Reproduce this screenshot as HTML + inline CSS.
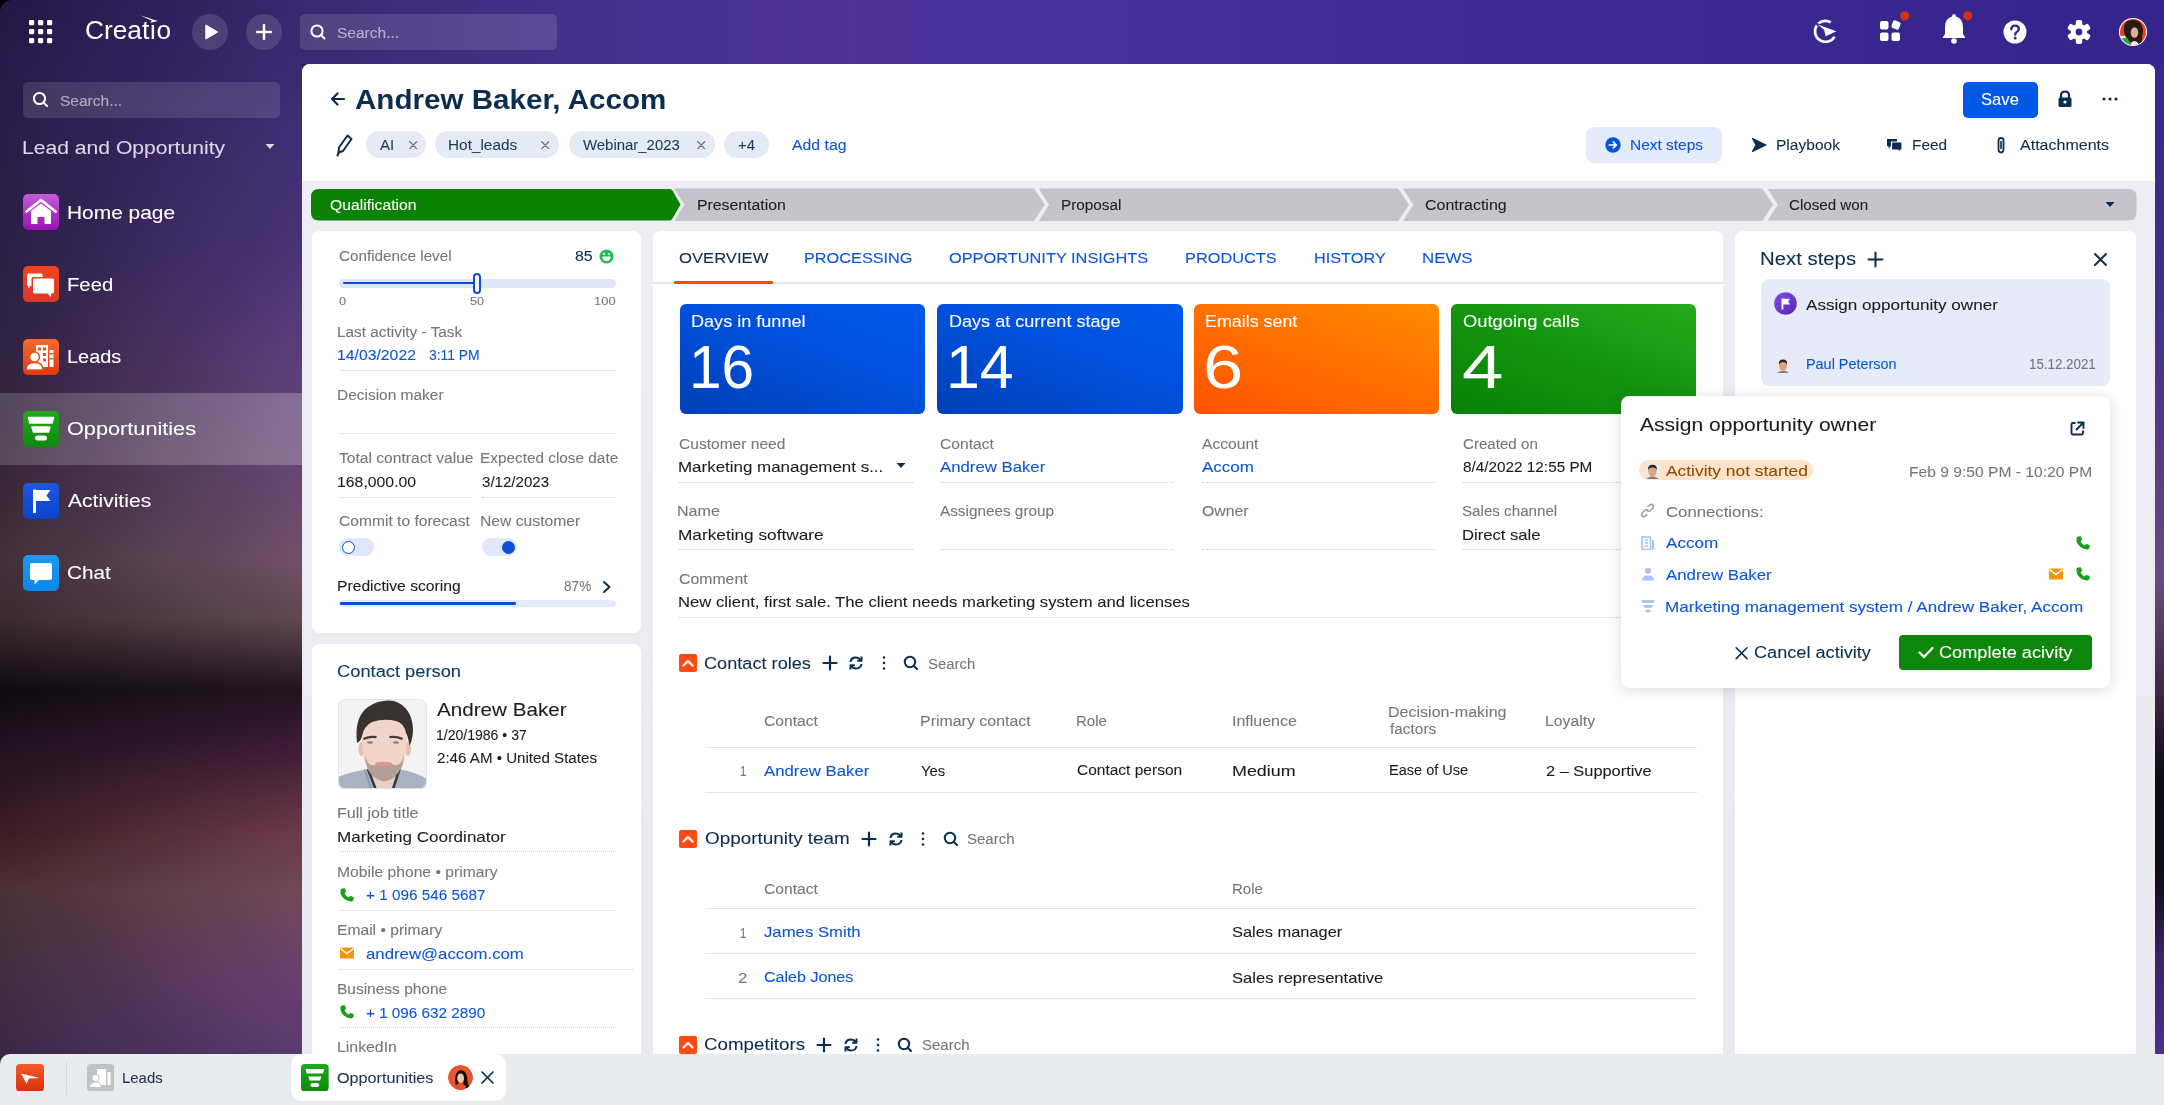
<!DOCTYPE html>
<html><head><meta charset="utf-8"><title>Creatio</title>
<style>
html,body{margin:0;padding:0;width:2164px;height:1105px;overflow:hidden;background:#000;}
body{position:relative;font-family:"Liberation Sans", sans-serif;}
.r{position:absolute;}
.t{position:absolute;white-space:nowrap;line-height:1;transform-origin:0 0;-webkit-text-stroke:0.08px currentColor;}
</style></head><body>
<div class="r" style="left:0;top:0;width:2164px;height:1105px;background:#000"></div>
<div class="r" style="left:0;top:0;width:2164px;height:1105px;border-top-left-radius:12px;overflow:hidden"><div class="r" style="left:0;top:0;width:2164px;height:1105px;background:linear-gradient(180deg,#231744 0px,#281a48 63px,#2c1e44 250px,#302240 350px,#3a2838 500px,#40303a 560px,#3a2a30 620px,#120a10 690px,#1e1020 740px,#3a1c24 830px,#4a3035 890px,#402c40 980px,#3a2848 1054px)"></div><div class="r" style="left:0;top:0;width:302px;height:1105px;background:linear-gradient(180deg,#3a2870 0px,#3b2a72 63px,#4a3478 250px,#5a3e7a 350px,#6a4a70 500px,#705068 560px,#604850 620px,#201420 690px,#3a1a35 740px,#6a3a48 830px,#704a58 890px,#6a4070 980px,#5a3a70 1054px);-webkit-mask-image:linear-gradient(90deg,rgba(0,0,0,0) 0px,rgba(0,0,0,1) 302px);mask-image:linear-gradient(90deg,rgba(0,0,0,0) 0px,rgba(0,0,0,1) 302px)"></div><div class="r" style="left:2150px;top:0;width:14px;height:1105px;background:linear-gradient(180deg,#37268f 0px,#3c2a8c 200px,#4e3688 400px,#6a4a80 580px,#3a2440 700px,#0e0814 780px,#140a1a 880px,#3a2468 960px,#4a3090 1054px)"></div><div class="r" style="left:302px;top:0;width:1862px;height:63.5px;background:linear-gradient(90deg,#3a2870 0px,#45308a 258px,#4c3196 548px,#46309a 848px,#3f2a96 1198px,#39268f 1548px,#35248b 1862px)"></div><div class="r" style="left:0;top:40px;width:302px;height:40px;background:linear-gradient(180deg,rgba(0,0,0,0),rgba(0,0,0,0))"></div></div>
<svg class="r" style="left:0px;top:0px;" width="60" height="60" viewBox="0 0 60 60"><rect x="29.0" y="20.0" width="5.2" height="5.2" rx="1.3" fill="#fff"/><rect x="29.0" y="29.0" width="5.2" height="5.2" rx="1.3" fill="#fff"/><rect x="29.0" y="38.0" width="5.2" height="5.2" rx="1.3" fill="#fff"/><rect x="38.0" y="20.0" width="5.2" height="5.2" rx="1.3" fill="#fff"/><rect x="38.0" y="29.0" width="5.2" height="5.2" rx="1.3" fill="#fff"/><rect x="38.0" y="38.0" width="5.2" height="5.2" rx="1.3" fill="#fff"/><rect x="47.0" y="20.0" width="5.2" height="5.2" rx="1.3" fill="#fff"/><rect x="47.0" y="29.0" width="5.2" height="5.2" rx="1.3" fill="#fff"/><rect x="47.0" y="38.0" width="5.2" height="5.2" rx="1.3" fill="#fff"/></svg>
<div class="t" id="k860_397" style="left:84.95px;top:18.45px;font-size:25px;color:#fff;transform:scaleX(1.0500);-webkit-text-stroke:0;">Creat&#305;o</div>
<svg class="r" style="left:138px;top:12px;" width="24" height="14" viewBox="0 0 24 14"><path d="M2 3.2 Q9 5.5 20 9 L12.5 10.8 L13.8 8.6 Q8 6 2 3.2 Z" fill="#fff"/></svg>
<div class="r" style="left:191.5px;top:13.5px;width:36px;height:36px;background:rgba(255,255,255,0.13);border-radius:18px;"></div>
<svg class="r" style="left:191.5px;top:13.5px;" width="36" height="36" viewBox="0 0 36 36"><path d="M14 11.5 L25 18 L14 24.5 Z" fill="#fff" stroke="#fff" stroke-width="1.5" stroke-linejoin="round"/></svg>
<div class="r" style="left:245.5px;top:13.5px;width:36px;height:36px;background:rgba(255,255,255,0.13);border-radius:18px;"></div>
<svg class="r" style="left:245.5px;top:13.5px;" width="36" height="36" viewBox="0 0 36 36"><path d="M18 11 V25 M11 18 H25" stroke="#fff" stroke-width="2.4" stroke-linecap="round"/></svg>
<div class="r" style="left:300px;top:13.5px;width:257px;height:36px;background:rgba(255,255,255,0.12);border-radius:5px;"></div>
<svg class="r" style="left:308px;top:22px;" width="20" height="20" viewBox="0 0 20 20"><circle cx="9" cy="9" r="5.6" fill="none" stroke="#fff" stroke-width="2"/><path d="M13 13 L16.5 16.5" stroke="#fff" stroke-width="2" stroke-linecap="round"/></svg>
<div class="t" id="k3380_378" style="left:336.97px;top:25.05px;font-size:15px;color:rgba(255,255,255,0.55);transform:scaleX(1.0345);">Search...</div>
<svg class="r" style="left:1810px;top:16px;" width="32" height="32" viewBox="0 0 32 32"><path d="M24.6 20.65 A10.5 10.5 0 1 1 20.75 6.3" fill="none" stroke="#fff" stroke-width="2.6"/><path d="M4.8 6.8 L27.6 15.2 L15.2 21.2 L13.6 14.2 Z" fill="#fff" stroke="#3a2790" stroke-width="1.2" stroke-linejoin="round"/></svg>
<svg class="r" style="left:1876px;top:8px;" width="40" height="40" viewBox="0 0 40 40"><rect x="4" y="13" width="8.5" height="8.5" rx="2" fill="#fff"/><rect x="4" y="24.5" width="8.5" height="8.5" rx="2" fill="#fff"/><rect x="15.5" y="24.5" width="8.5" height="8.5" rx="2" fill="#fff"/><rect x="16" y="13" width="8" height="8" rx="2" fill="#fff" transform="rotate(20 20 17)"/><circle cx="28.7" cy="7.8" r="4.6" fill="#d52e10"/></svg>
<svg class="r" style="left:1938px;top:8px;" width="40" height="40" viewBox="0 0 40 40"><path d="M14 8.5 Q14 6 16 6 Q18 6 18 8.5 Q25 10.5 25 19 V26 L27.5 30 H4.5 L7 26 V19 Q7 10.5 14 8.5 Z" fill="#fff" transform="translate(0,0)"/><circle cx="16" cy="33" r="2.8" fill="#fff"/><circle cx="29.7" cy="7.8" r="4.6" fill="#d52e10"/></svg>
<svg class="r" style="left:2003px;top:19.5px;" width="24" height="24" viewBox="0 0 24 24"><circle cx="12" cy="12" r="11.5" fill="#fff"/><path d="M8.3 9.3 Q8.3 5.6 12 5.6 Q15.8 5.6 15.8 9 Q15.8 11 13.5 12.2 Q12.2 13 12.2 14.6" fill="none" stroke="#3a2790" stroke-width="2.4" stroke-linecap="round"/><circle cx="12.2" cy="18" r="1.5" fill="#3a2790"/></svg>
<svg class="r" style="left:2067px;top:19.5px;" width="24" height="24" viewBox="0 0 24 24"><g transform="translate(12,12)"><rect x="-3.2" y="-12" width="6.4" height="7" rx="2" fill="#fff" transform="rotate(0)"/><rect x="-3.2" y="-12" width="6.4" height="7" rx="2" fill="#fff" transform="rotate(60)"/><rect x="-3.2" y="-12" width="6.4" height="7" rx="2" fill="#fff" transform="rotate(120)"/><rect x="-3.2" y="-12" width="6.4" height="7" rx="2" fill="#fff" transform="rotate(180)"/><rect x="-3.2" y="-12" width="6.4" height="7" rx="2" fill="#fff" transform="rotate(240)"/><rect x="-3.2" y="-12" width="6.4" height="7" rx="2" fill="#fff" transform="rotate(300)"/><circle r="8.2" fill="#fff"/><circle r="3.4" fill="#3a2790"/></g></svg>
<svg class="r" style="left:2118px;top:17px;" width="30" height="30" viewBox="0 0 30 30"><defs><clipPath id="cav2"><circle cx="15" cy="15" r="13"/></clipPath></defs><circle cx="15" cy="15" r="14" fill="#fff"/><g clip-path="url(#cav2)"><rect width="30" height="30" fill="#e8441a"/><path d="M0 20 L9 18 L13 30 L0 30 Z" fill="#f4f4f4"/><path d="M2 23 Q7 19 11 22 L14 30 L2 30 Z" fill="#22a84a"/><path d="M6 10 Q7 3 14 3 Q22 2 24 9 Q26 14 24 20 Q25 25 21 28 L17 26 Q12 27 10 22 Q5 19 6 10 Z" fill="#2a1a16"/><ellipse cx="16.5" cy="15.5" rx="3.8" ry="5.2" fill="#dcae92"/><path d="M13 26 Q16 22 20 26 L20 30 L13 30 Z" fill="#f2f2f2"/></g></svg>
<div class="r" style="left:22.5px;top:81.5px;width:257px;height:36.5px;background:rgba(255,255,255,0.12);border-radius:5px;"></div>
<svg class="r" style="left:30px;top:89px;" width="20" height="20" viewBox="0 0 20 20"><circle cx="9.5" cy="9.5" r="5.6" fill="none" stroke="#fff" stroke-width="2"/><path d="M13.5 13.5 L17 17" stroke="#fff" stroke-width="2" stroke-linecap="round"/></svg>
<div class="t" id="k610_1055" style="left:59.97px;top:92.75px;font-size:15px;color:rgba(255,255,255,0.55);transform:scaleX(1.0345);">Search...</div>
<div class="t" id="k230_1545" style="left:21.86px;top:138.78px;font-size:18.5px;color:#dcd7e6;transform:scaleX(1.1412);">Lead and Opportunity</div>
<svg class="r" style="left:262px;top:142px;" width="16" height="10" viewBox="0 0 16 10"><path d="M3.5 2 L12.5 2 L8 7 Z" fill="#dcd7e6"/></svg>
<div class="r" style="left:0px;top:393px;width:302px;height:72px;background:linear-gradient(90deg, rgba(255,255,255,0.16), rgba(255,255,255,0.24));border-radius:0px;"></div>
<div class="t" id="k682_2195" style="left:67.07px;top:203.78px;font-size:18.5px;color:#ffffff;transform:scaleX(1.1298);">Home page</div>
<div class="t" id="k682_2915" style="left:67.11px;top:275.77px;font-size:18.5px;color:#ffffff;transform:scaleX(1.0950);">Feed</div>
<div class="t" id="k682_3635" style="left:67.12px;top:347.77px;font-size:18.5px;color:#ffffff;transform:scaleX(1.0776);">Leads</div>
<div class="t" id="k682_4355" style="left:67.03px;top:419.77px;font-size:18.5px;color:#ffffff;transform:scaleX(1.1725);">Opportunities</div>
<div class="t" id="k682_5075" style="left:68.20px;top:491.77px;font-size:18.5px;color:#ffffff;transform:scaleX(1.1397);">Activities</div>
<div class="t" id="k682_5795" style="left:67.08px;top:563.77px;font-size:18.5px;color:#ffffff;transform:scaleX(1.1211);">Chat</div>
<svg class="r" style="left:22.5px;top:194px;" width="36" height="36" viewBox="0 0 36 36"><defs><linearGradient id="gh" x1="0" y1="0" x2="0" y2="1"><stop offset="0" stop-color="#c35bd8"/><stop offset="1" stop-color="#9a12b4"/></linearGradient></defs><rect width="36" height="36" rx="5" fill="url(#gh)"/><path d="M3.5 17.5 L18 6 L32.5 17.5" fill="none" stroke="#fff" stroke-width="2.8" stroke-linecap="round" stroke-linejoin="round"/><path d="M8 17 L18 9.5 L28 17 V30 H21.5 V23 H14.5 V30 H8 Z" fill="#fff"/></svg>
<svg class="r" style="left:22.5px;top:266px;" width="36" height="36" viewBox="0 0 36 36"><defs><linearGradient id="gf" x1="0" y1="0" x2="0" y2="1"><stop offset="0" stop-color="#f4431d"/><stop offset="1" stop-color="#d83a25"/></linearGradient></defs><rect width="36" height="36" rx="5" fill="url(#gf)"/><path d="M4 9 Q4 7.5 5.5 7.5 H18 Q19.5 7.5 19.5 9 V11 H10 Q8.5 11 8.5 12.5 V20 H7.5 L5.5 22.5 V20 Q4 20 4 18.5 Z" fill="#fff"/><path d="M10 14 Q10 12.5 11.5 12.5 H29.5 Q31 12.5 31 14 V26 Q31 27.5 29.5 27.5 H28 V31 L24.5 27.5 H11.5 Q10 27.5 10 26 Z" fill="#fff"/></svg>
<svg class="r" style="left:22.5px;top:338.5px;" width="36" height="36" viewBox="0 0 36 36"><defs><linearGradient id="gl" x1="0" y1="0" x2="0" y2="1"><stop offset="0" stop-color="#f66a2e"/><stop offset="1" stop-color="#de3a12"/></linearGradient></defs><rect width="36" height="36" rx="5" fill="url(#gl)"/><rect x="13" y="6" width="12" height="22" fill="#fff"/><rect x="15" y="8.5" width="3" height="3" fill="#e8501c"/><rect x="20" y="8.5" width="3" height="3" fill="#e8501c"/><rect x="20" y="14" width="3" height="3" fill="#e8501c"/><rect x="20" y="19.5" width="3" height="3" fill="#e8501c"/><rect x="26.5" y="11" width="4" height="17" fill="#fff"/><rect x="26.5" y="14" width="4" height="1.5" fill="#e8501c"/><rect x="26.5" y="19" width="4" height="1.5" fill="#e8501c"/><circle cx="11.5" cy="18" r="5" fill="#fff" stroke="#e8501c" stroke-width="1.5"/><path d="M3 31 Q3 23.5 11.5 23.5 Q20 23.5 20 31 Z" fill="#fff" stroke="#e8501c" stroke-width="1.5"/></svg>
<svg class="r" style="left:22.5px;top:410.5px;" width="36" height="36" viewBox="0 0 36 36"><defs><linearGradient id="go" x1="0" y1="0" x2="0" y2="1"><stop offset="0" stop-color="#22a81a"/><stop offset="1" stop-color="#0d8a0c"/></linearGradient></defs><rect width="36" height="36" rx="5" fill="url(#go)"/><path d="M5.5 6.5 H30.5 L29 12 H7 Z" fill="#fff" stroke="#fff" stroke-width="1.5" stroke-linejoin="round"/><path d="M9 16 H27 L25.5 21 H10.5 Z" fill="#fff" stroke="#fff" stroke-width="1.5" stroke-linejoin="round"/><rect x="12" y="24.5" width="12" height="5" rx="2.5" fill="#fff"/></svg>
<svg class="r" style="left:22.5px;top:482.5px;" width="36" height="36" viewBox="0 0 36 36"><defs><linearGradient id="ga" x1="0" y1="0" x2="0" y2="1"><stop offset="0" stop-color="#1c56e6"/><stop offset="1" stop-color="#0a44c6"/></linearGradient></defs><rect width="36" height="36" rx="5" fill="url(#ga)"/><rect x="10" y="6.5" width="3" height="23.5" fill="#fff"/><path d="M13 7 H27.5 L23.5 12.5 L27.5 18 H13 Z" fill="#fff"/></svg>
<svg class="r" style="left:22.5px;top:554.5px;" width="36" height="36" viewBox="0 0 36 36"><defs><linearGradient id="gc" x1="0" y1="0" x2="0" y2="1"><stop offset="0" stop-color="#1f9af0"/><stop offset="1" stop-color="#0b86e8"/></linearGradient></defs><rect width="36" height="36" rx="5" fill="url(#gc)"/><path d="M7 10 Q7 8 9 8 H27 Q29 8 29 10 V23 Q29 25 27 25 H16 L11.5 29.5 V25 H9 Q7 25 7 23 Z" fill="#fff"/></svg>
<div class="r" style="left:302px;top:63.5px;width:1853px;height:991px;background:linear-gradient(180deg,#efeef5,#ebe9f0);border-top-left-radius:8px;border-top-right-radius:8px;overflow:hidden"><div style="position:absolute;left:0;top:0;width:100%;height:117.5px;background:#fff"></div></div>
<svg class="r" style="left:328px;top:90px;" width="20" height="18" viewBox="0 0 20 18"><path d="M4 9 H16 M9.5 3.5 L4 9 L9.5 14.5" fill="none" stroke="#0b2d4f" stroke-width="2.2" stroke-linecap="round" stroke-linejoin="round"/></svg>
<div class="t" id="k3565_1094" style="left:355.44px;top:85.60px;font-size:28px;color:#0b2d4f;transform:scaleX(1.0565);font-weight:700;-webkit-text-stroke:0;">Andrew Baker, Accom</div>
<svg class="r" style="left:334px;top:132px;" width="20" height="26" viewBox="0 0 20 26"><path d="M13.5 3.5 L17.5 7 L9 19 L4.5 20.5 L5 15.5 Z" fill="none" stroke="#0b2d4f" stroke-width="2" stroke-linejoin="round"/><path d="M5 20 L3.5 23.5" stroke="#0b2d4f" stroke-width="2" stroke-linecap="round"/></svg>
<div class="r" style="left:365.7px;top:131.4px;width:60.30000000000001px;height:27px;background:#e4ebf7;border-radius:13.5px;"></div>
<div class="t" id="k3796_1495" style="left:379.60px;top:137.60px;font-size:14px;color:#1e3a5a;transform:scaleX(1.0750);">AI</div>
<svg class="r" style="left:407.5px;top:139.5px;" width="11" height="11" viewBox="0 0 11 11"><path d="M1.8 1.8 L8.6 8.6 M8.6 1.8 L1.8 8.6" stroke="#6d7078" stroke-width="1.3" stroke-linecap="round"/></svg>
<div class="r" style="left:435px;top:131.4px;width:124.39999999999998px;height:27px;background:#e4ebf7;border-radius:13.5px;"></div>
<div class="t" id="k4490_1495" style="left:447.90px;top:137.60px;font-size:14px;color:#1e3a5a;transform:scaleX(1.0968);">Hot_leads</div>
<svg class="r" style="left:540px;top:139.5px;" width="11" height="11" viewBox="0 0 11 11"><path d="M1.8 1.8 L8.6 8.6 M8.6 1.8 L1.8 8.6" stroke="#6d7078" stroke-width="1.3" stroke-linecap="round"/></svg>
<div class="r" style="left:568.8px;top:131.4px;width:146.10000000000002px;height:27px;background:#e4ebf7;border-radius:13.5px;"></div>
<div class="t" id="k5830_1495" style="left:583.00px;top:137.60px;font-size:14px;color:#1e3a5a;transform:scaleX(1.0659);">Webinar_2023</div>
<svg class="r" style="left:696px;top:139.5px;" width="11" height="11" viewBox="0 0 11 11"><path d="M1.8 1.8 L8.6 8.6 M8.6 1.8 L1.8 8.6" stroke="#6d7078" stroke-width="1.3" stroke-linecap="round"/></svg>
<div class="r" style="left:724px;top:131.4px;width:44.5px;height:27px;background:#e4ebf7;border-radius:13.5px;"></div>
<div class="t" id="k7380_1495" style="left:738.00px;top:137.60px;font-size:14px;color:#1e3a5a;transform:scaleX(1.0625);">+4</div>
<div class="t" id="k7918_1497" style="left:791.80px;top:137.80px;font-size:14px;color:#0a55d6;transform:scaleX(1.1292);">Add tag</div>
<div class="r" style="left:1963px;top:81.7px;width:74.8px;height:36px;background:#0058e6;border-radius:5px;"></div>
<div class="t" id="k19817_1054" style="left:1980.69px;top:91.38px;font-size:16.5px;color:#fff;transform:scaleX(1.0083);">Save</div>
<svg class="r" style="left:2056px;top:89px;" width="18" height="20" viewBox="0 0 18 20"><path d="M5 9 V6.5 Q5 2.5 9 2.5 Q13 2.5 13 6.5 V9" fill="none" stroke="#0b2d4f" stroke-width="2.2"/><rect x="2.5" y="8.5" width="13" height="9.5" rx="1.5" fill="#0b2d4f"/><circle cx="9" cy="13" r="1.6" fill="#fff"/></svg>
<svg class="r" style="left:2100px;top:94px;" width="20" height="10" viewBox="0 0 20 10"><circle cx="4" cy="5" r="1.6" fill="#0b2d4f"/><circle cx="10" cy="5" r="1.6" fill="#0b2d4f"/><circle cx="16" cy="5" r="1.6" fill="#0b2d4f"/></svg>
<div class="r" style="left:1585.8px;top:126.7px;width:135.8px;height:36px;background:#e4ecfb;border-radius:8px;"></div>
<svg class="r" style="left:1604px;top:136px;" width="18" height="18" viewBox="0 0 18 18"><circle cx="9" cy="9" r="7.7" fill="#0a55d6"/><path d="M5.3 9 H12.2 M9.3 6 L12.3 9 L9.3 12" fill="none" stroke="#fff" stroke-width="1.7" stroke-linecap="round" stroke-linejoin="round"/></svg>
<div class="t" id="k16310_1499" style="left:1629.90px;top:138.00px;font-size:14px;color:#0a55d6;transform:scaleX(1.1046);">Next steps</div>
<svg class="r" style="left:1750px;top:136px;" width="18" height="18" viewBox="0 0 18 18"><path d="M2.5 2.5 L16 9 L2.5 15.5 L6 9 Z" fill="#0b2d4f" stroke="#0b2d4f" stroke-width="1.2" stroke-linejoin="round"/></svg>
<div class="t" id="k17767_1499" style="left:1775.59px;top:138.00px;font-size:14px;color:#0b2d4f;transform:scaleX(1.1105);">Playbook</div>
<svg class="r" style="left:1885px;top:136px;" width="20" height="18" viewBox="0 0 20 18"><path d="M2 3 H12 V10 H6 L3.5 12.5 V10 H2 Z" fill="#0b2d4f"/><path d="M6.5 6 H17 V14 H15.5 V16.5 L13 14 H6.5 Z" fill="#0b2d4f" stroke="#fff" stroke-width="1.2"/></svg>
<div class="t" id="k19130_1499" style="left:1911.90px;top:138.00px;font-size:14px;color:#0b2d4f;transform:scaleX(1.1000);">Feed</div>
<svg class="r" style="left:1993px;top:135px;" width="16" height="20" viewBox="0 0 16 20"><path d="M10.5 5 V14 Q10.5 17.5 8 17.5 Q5.5 17.5 5.5 14 V6 Q5.5 3 8 3 Q10.5 3 10.5 5" fill="none" stroke="#0b2d4f" stroke-width="1.8"/><path d="M8 6.5 V13.5" stroke="#0b2d4f" stroke-width="1.6" stroke-linecap="round"/></svg>
<div class="t" id="k20198_1499" style="left:2019.80px;top:138.00px;font-size:14px;color:#0b2d4f;transform:scaleX(1.1436);">Attachments</div>
<svg class="r" style="left:0;top:0" width="2164" height="240"><path d="M319 189 H670 Q671.5 189 672.5 190.5 L680.5 204.5 L672.5 218.5 Q671.5 220.5 670 220.5 H319 Q311 220.5 311 212.5 V197 Q311 189 319 189 Z" fill="#0c8204"/><path d="M675 189 H1033.8 L1044.3 204.7 L1033.8 220.5 H675 L685 204.7 Z" fill="#c5c4cb" stroke="#c5c4cb" stroke-width="1" stroke-linejoin="round"/><path d="M1039.6 189 H1398.0 L1408.5 204.7 L1398.0 220.5 H1039.6 L1049.6 204.7 Z" fill="#c5c4cb" stroke="#c5c4cb" stroke-width="1" stroke-linejoin="round"/><path d="M1403.8 189 H1762.0 L1772.5 204.7 L1762.0 220.5 H1403.8 L1413.8 204.7 Z" fill="#c5c4cb" stroke="#c5c4cb" stroke-width="1" stroke-linejoin="round"/><path d="M1767.8 189 H2128.5 Q2136.5 189 2136.5 197 V212.5 Q2136.5 220.5 2128.5 220.5 H1767.8 L1777.8 204.7 Z" fill="#c5c4cb"/></svg>
<div class="t" id="k3295_2100" style="left:329.50px;top:198.10px;font-size:14px;color:#fff;transform:scaleX(1.1234);">Qualification</div>
<div class="t" id="k6980_2100" style="left:696.87px;top:198.10px;font-size:14px;color:#202020;transform:scaleX(1.1299);">Presentation</div>
<div class="t" id="k10617_2100" style="left:1060.61px;top:198.10px;font-size:14px;color:#202020;transform:scaleX(1.0926);">Proposal</div>
<div class="t" id="k14250_2100" style="left:1425.00px;top:198.10px;font-size:14px;color:#202020;transform:scaleX(1.1408);">Contracting</div>
<div class="t" id="k17890_2100" style="left:1789.00px;top:198.10px;font-size:14px;color:#202020;transform:scaleX(1.0822);">Closed won</div>
<svg class="r" style="left:2102px;top:200px;" width="16" height="10" viewBox="0 0 16 10"><path d="M3.5 2 L12.5 2 L8 7 Z" fill="#0b2d4f"/></svg>
<div class="r" style="left:312px;top:230.5px;width:329px;height:402.5px;background:#fff;border-radius:8px;"></div>
<div class="t" id="k3385_2610" style="left:338.50px;top:249.10px;font-size:14px;color:#767676;transform:scaleX(1.0874);">Confidence level</div>
<div class="t" id="k5750_2610" style="left:575.00px;top:249.10px;font-size:14px;color:#0b2d4f;transform:scaleX(1.1333);">85</div>
<svg class="r" style="left:598px;top:248px;" width="17" height="17" viewBox="0 0 17 17"><circle cx="8.5" cy="8.5" r="7" fill="#22bf55"/><path d="M4.5 8.5 Q4.5 13 8.5 13 Q12.5 13 12.5 8.5 Z" fill="#fff"/><circle cx="6" cy="6" r="1.1" fill="#fff"/><circle cx="11" cy="6" r="1.1" fill="#fff"/></svg>
<div class="r" style="left:338.5px;top:279px;width:277px;height:8.6px;background:#dce6f7;border-radius:4.3px;"></div>
<div class="r" style="left:343px;top:281.8px;width:133px;height:2.6px;background:#0b4fd8;border-radius:1.3px;"></div>
<div class="r" style="left:472.7px;top:273px;width:8px;height:20.5px;background:#fff;border-radius:4px;border:2px solid #0b4fd8;box-sizing:border-box"></div>
<div class="t" id="k3385_3057" style="left:338.50px;top:296.35px;font-size:11px;color:#767676;transform:scaleX(1.1667);">0</div>
<div class="t" id="k4698_3057" style="left:469.80px;top:296.35px;font-size:11px;color:#767676;transform:scaleX(1.1500);">50</div>
<div class="t" id="k5950_3057" style="left:593.82px;top:296.35px;font-size:11px;color:#767676;transform:scaleX(1.1765);">100</div>
<div class="t" id="k3385_3365" style="left:337.40px;top:324.60px;font-size:14px;color:#767676;transform:scaleX(1.0973);">Last activity - Task</div>
<div class="t" id="k3385_3602" style="left:337.45px;top:347.45px;font-size:15px;color:#0a55d6;transform:scaleX(1.0514);">14/03/2022</div>
<div class="t" id="k4285_3602" style="left:428.50px;top:347.45px;font-size:15px;color:#0a55d6;transform:scaleX(0.9259);">3:11 PM</div>
<div class="r" style="left:338.5px;top:370px;width:277.5px;height:0;border-top:1px dotted #cfcfd6;"></div>
<div class="t" id="k3385_4000" style="left:337.40px;top:388.10px;font-size:14px;color:#767676;transform:scaleX(1.1042);">Decision maker</div>
<div class="r" style="left:338.5px;top:433px;width:277.5px;height:0;border-top:1px dotted #cfcfd6;"></div>
<div class="t" id="k3385_4632" style="left:338.50px;top:451.30px;font-size:14px;color:#767676;transform:scaleX(1.1150);">Total contract value</div>
<div class="t" id="k4815_4632" style="left:480.40px;top:451.30px;font-size:14px;color:#767676;transform:scaleX(1.0960);">Expected close date</div>
<div class="t" id="k3385_4866" style="left:337.45px;top:473.85px;font-size:15px;color:#1c1c1c;transform:scaleX(1.0541);">168,000.00</div>
<div class="t" id="k4815_4866" style="left:481.50px;top:473.85px;font-size:15px;color:#1c1c1c;transform:scaleX(1.0045);">3/12/2023</div>
<div class="r" style="left:338.5px;top:496.5px;width:133.5px;height:0;border-top:1px dotted #cfcfd6;"></div>
<div class="r" style="left:481.5px;top:496.5px;width:134.5px;height:0;border-top:1px dotted #cfcfd6;"></div>
<div class="t" id="k3385_5257" style="left:338.50px;top:513.80px;font-size:14px;color:#767676;transform:scaleX(1.1144);">Commit to forecast</div>
<div class="t" id="k4815_5257" style="left:480.38px;top:513.80px;font-size:14px;color:#767676;transform:scaleX(1.1213);">New customer</div>
<div class="r" style="left:338.5px;top:538px;width:35.5px;height:18px;background:#dfe8fa;border-radius:9px;"></div>
<div class="r" style="left:342px;top:540.5px;width:13px;height:13px;border-radius:50%;background:#fff;border:1.8px solid #0b4fd8;box-sizing:border-box"></div>
<div class="r" style="left:481.5px;top:538px;width:35.5px;height:18px;background:#dfe8fa;border-radius:9px;"></div>
<div class="r" style="left:501.5px;top:540.5px;width:13.5px;height:13.5px;background:#0b4fd8;border-radius:7px;"></div>
<div class="t" id="k3385_5912" style="left:337.38px;top:579.30px;font-size:14px;color:#1c1c1c;transform:scaleX(1.1193);">Predictive scoring</div>
<div class="t" id="k5638_5912" style="left:563.80px;top:579.30px;font-size:14px;color:#767676;transform:scaleX(0.9714);">87%</div>
<svg class="r" style="left:600px;top:579px;" width="14" height="16" viewBox="0 0 14 16"><path d="M4 3 L9.5 8 L4 13" fill="none" stroke="#0b2d4f" stroke-width="2" stroke-linecap="round" stroke-linejoin="round"/></svg>
<div class="r" style="left:338.5px;top:600px;width:277px;height:6.6px;background:#e3ebf8;border-radius:3.3px;"></div>
<div class="r" style="left:340.4px;top:602px;width:175.6px;height:2.6px;background:#0b4fd8;border-radius:1.3px;"></div>
<div class="r" style="left:312px;top:644px;width:329px;height:420px;background:#fff;border-radius:8px;"></div>
<div class="t" id="k3384_6772" style="left:337.26px;top:663.60px;font-size:16px;color:#0d3a64;transform:scaleX(1.1430);">Contact person</div>
<svg class="r" style="left:338.4px;top:699.3px" width="89" height="90" viewBox="0 0 89 90"><defs><clipPath id="phc"><rect width="89" height="90" rx="7"/></clipPath>
<radialGradient id="skin" cx="0.5" cy="0.45" r="0.6"><stop offset="0" stop-color="#f0cdb8"/><stop offset="1" stop-color="#d9a88e"/></radialGradient></defs>
<g clip-path="url(#phc)"><rect width="89" height="90" fill="#f3f3f4"/>
<path d="M0 90 V78 Q12 73 30 70 L60 70 Q78 73 89 80 V90 Z" fill="#aab2c2"/>
<path d="M31 68 L38 90 L54 90 L61 68 Z" fill="#ead0c4"/>
<path d="M30 70 L37.5 90 M61.5 70 L55 90" stroke="#343a48" stroke-width="2.6"/>
<path d="M27 71 L33 90" stroke="#8a9ab8" stroke-width="2"/>
<ellipse cx="23.5" cy="50" rx="3" ry="7" fill="#e6beae"/><ellipse cx="70" cy="50" rx="3" ry="7" fill="#e6beae"/>
<path d="M24 40 Q24 78 46 82.5 Q68 78 69 40 Q69 20 46.5 18 Q24 20 24 40 Z" fill="#f0d5c8"/>
<path d="M27 56 Q28 79 46 82.5 Q65 79 66 56 Q63 68 56 66 Q46 61 37 66 Q30 68 27 56 Z" fill="#6a5a56" opacity="0.45"/>
<ellipse cx="45.5" cy="64.8" rx="8.5" ry="2.1" fill="#d99c98"/>
<path d="M19 44 Q16 18 30 8 Q42 0 56 2 Q74 8 75 30 Q75 40 71.5 47 Q70 37 68 34 Q66 24 58 22 Q46 19 34 23 Q26 27 24 37 Q23 42 19 44 Z" fill="#3a3230"/>
<path d="M25.5 40 Q32 36.8 38.5 38.2 M51.5 38.2 Q58 36.8 64.5 40" stroke="#4a3a35" stroke-width="2.2" fill="none"/>
<ellipse cx="32" cy="43.5" rx="3" ry="1.3" fill="#7a8585"/><ellipse cx="58" cy="43.5" rx="3" ry="1.3" fill="#7a8585"/>
</g><rect x="0.5" y="0.5" width="88" height="89" rx="7" fill="none" stroke="#e4e4e8"/></svg>
<div class="t" id="k4374_7172" style="left:437.40px;top:701.48px;font-size:18.5px;color:#1c1c1c;transform:scaleX(1.1155);">Andrew Baker</div>
<div class="t" id="k4374_7400" style="left:436.40px;top:728.10px;font-size:14px;color:#1c1c1c;transform:scaleX(1.0022);">1/20/1986 • 37</div>
<div class="t" id="k4374_7638" style="left:437.40px;top:752.07px;font-size:13.8px;color:#1c1c1c;transform:scaleX(1.0959);">2:46 AM • United States</div>
<div class="t" id="k3384_8178" style="left:337.25px;top:805.90px;font-size:14px;color:#767676;transform:scaleX(1.1500);">Full job title</div>
<div class="t" id="k3384_8415" style="left:337.26px;top:828.75px;font-size:15px;color:#1c1c1c;transform:scaleX(1.1372);">Marketing Coordinator</div>
<div class="r" style="left:338.5px;top:851.4px;width:277.5px;height:0;border-top:1px dotted #cfcfd6;"></div>
<div class="t" id="k3385_8770" style="left:337.38px;top:865.10px;font-size:14px;color:#767676;transform:scaleX(1.1189);">Mobile phone • primary</div>
<svg class="r" style="left:339px;top:887px;" width="16" height="16" viewBox="0 0 16 16"><path d="M3.2 1.5 L5.8 1.2 L7.2 4.8 L5.5 6.2 Q6.8 9.2 9.8 10.6 L11.2 8.8 L14.8 10.2 L14.5 12.8 Q14 14.6 12 14.6 Q6.5 14 3 9.5 Q1.2 6.5 1.4 3.4 Q1.6 1.8 3.2 1.5 Z" fill="#18a018"/></svg>
<div class="t" id="k3656_9002" style="left:365.60px;top:887.45px;font-size:15px;color:#0a55d6;transform:scaleX(1.0197);">+ 1 096 546 5687</div>
<div class="r" style="left:338.5px;top:909.7px;width:277.5px;height:0;border-top:1px dotted #cfcfd6;"></div>
<div class="t" id="k3385_9353" style="left:337.38px;top:923.40px;font-size:14px;color:#767676;transform:scaleX(1.1161);">Email • primary</div>
<svg class="r" style="left:339px;top:945px;" width="16" height="16" viewBox="0 0 16 16"><rect x="1" y="2.5" width="14" height="11" rx="1" fill="#f7930e"/><path d="M1.5 3.5 L8 8.5 L14.5 3.5" fill="none" stroke="#fff" stroke-width="1.5"/></svg>
<div class="t" id="k3656_9590" style="left:365.60px;top:946.25px;font-size:15px;color:#0a55d6;transform:scaleX(1.1186);">andrew@accom.com</div>
<div class="r" style="left:338.5px;top:968.6px;width:294.5px;height:0;border-top:1px dotted #cfcfd6;"></div>
<div class="t" id="k3385_9937" style="left:337.39px;top:981.80px;font-size:14px;color:#767676;transform:scaleX(1.1061);">Business phone</div>
<svg class="r" style="left:339px;top:1004px;" width="16" height="16" viewBox="0 0 16 16"><path d="M3.2 1.5 L5.8 1.2 L7.2 4.8 L5.5 6.2 Q6.8 9.2 9.8 10.6 L11.2 8.8 L14.8 10.2 L14.5 12.8 Q14 14.6 12 14.6 Q6.5 14 3 9.5 Q1.2 6.5 1.4 3.4 Q1.6 1.8 3.2 1.5 Z" fill="#18a018"/></svg>
<div class="t" id="k3656_10174" style="left:365.60px;top:1004.65px;font-size:15px;color:#0a55d6;transform:scaleX(1.0171);">+ 1 096 632 2890</div>
<div class="r" style="left:338.5px;top:1027.4px;width:277.5px;height:0;border-top:1px dotted #cfcfd6;"></div>
<div class="t" id="k3385_10523" style="left:337.37px;top:1040.40px;font-size:14px;color:#767676;transform:scaleX(1.1308);">LinkedIn</div>
<div class="r" style="left:653px;top:230.5px;width:1070px;height:830px;background:#fff;border-radius:8px;"></div>
<div class="r" style="left:653px;top:282px;width:1070px;height:1.5px;background:#e6e6ea;border-radius:0px;"></div>
<div class="r" style="left:674px;top:281px;width:98.7px;height:2.8px;background:#ff4a14;border-radius:1px;"></div>
<div class="t" id="k6789_2628" style="left:678.90px;top:249.80px;font-size:15.3px;color:#0b2d4f;transform:scaleX(1.0878);">OVERVIEW</div>
<div class="t" id="k8053_2628" style="left:804.24px;top:249.80px;font-size:15.3px;color:#0a55d6;transform:scaleX(1.0640);">PROCESSING</div>
<div class="t" id="k9494_2628" style="left:949.40px;top:249.80px;font-size:15.3px;color:#0a55d6;transform:scaleX(1.0688);">OPPORTUNITY INSIGHTS</div>
<div class="t" id="k11862_2628" style="left:1185.13px;top:249.80px;font-size:15.3px;color:#0a55d6;transform:scaleX(1.0682);">PRODUCTS</div>
<div class="t" id="k13150_2628" style="left:1313.94px;top:249.80px;font-size:15.3px;color:#0a55d6;transform:scaleX(1.0636);">HISTORY</div>
<div class="t" id="k14228_2628" style="left:1421.70px;top:249.80px;font-size:15.3px;color:#0a55d6;transform:scaleX(1.1022);">NEWS</div>
<div class="r" style="left:679.8px;top:303.6px;width:245.5px;height:110.7px;background:linear-gradient(20deg, #0040b4 0%, #0050dc 55%, #0058ea 100%);border-radius:6px;"></div>
<div class="t" id="k6925_3275" style="left:691.35px;top:314.15px;font-size:15.7px;color:#fff;transform:scaleX(1.1520);">Days in funnel</div>
<div class="t" id="k6925_3883" style="left:688.69px;top:336.03px;font-size:61.5px;color:#fff;transform:scaleX(0.9532);-webkit-text-stroke:0;">16</div>
<div class="r" style="left:937px;top:303.6px;width:245.5px;height:110.7px;background:linear-gradient(20deg, #0040b4 0%, #0050dc 55%, #0058ea 100%);border-radius:6px;"></div>
<div class="t" id="k9497_3275" style="left:948.55px;top:314.15px;font-size:15.7px;color:#fff;transform:scaleX(1.1507);">Days at current stage</div>
<div class="t" id="k9497_3883" style="left:945.74px;top:336.03px;font-size:61.5px;color:#fff;transform:scaleX(0.9889);-webkit-text-stroke:0;">14</div>
<div class="r" style="left:1193.7px;top:303.6px;width:245.5px;height:110.7px;background:linear-gradient(20deg, #ff5200 0%, #ff6e00 50%, #ff8c00 100%);border-radius:6px;"></div>
<div class="t" id="k12064_3275" style="left:1205.26px;top:314.15px;font-size:15.7px;color:#fff;transform:scaleX(1.1388);">Emails sent</div>
<div class="t" id="k12064_3883" style="left:1202.87px;top:336.03px;font-size:61.5px;color:#fff;transform:scaleX(1.1759);-webkit-text-stroke:0;">6</div>
<div class="r" style="left:1450.7px;top:303.6px;width:245.5px;height:110.7px;background:linear-gradient(20deg, #078006 0%, #14930f 50%, #24ab1b 100%);border-radius:6px;"></div>
<div class="t" id="k14634_3275" style="left:1463.40px;top:314.15px;font-size:15.7px;color:#fff;transform:scaleX(1.1707);">Outgoing calls</div>
<div class="t" id="k14634_3883" style="left:1462.19px;top:336.03px;font-size:61.5px;color:#fff;transform:scaleX(1.2125);-webkit-text-stroke:0;">4</div>
<div class="t" id="k6786_4486" style="left:678.60px;top:436.70px;font-size:14px;color:#767676;transform:scaleX(1.1116);">Customer need</div>
<div class="t" id="k9403_4486" style="left:940.30px;top:436.70px;font-size:14px;color:#767676;transform:scaleX(1.1146);">Contact</div>
<div class="t" id="k12015_4486" style="left:1201.50px;top:436.70px;font-size:14px;color:#767676;transform:scaleX(1.1157);">Account</div>
<div class="t" id="k14634_4486" style="left:1463.40px;top:436.70px;font-size:14px;color:#767676;transform:scaleX(1.0797);">Created on</div>
<div class="t" id="k6790_4721" style="left:677.87px;top:459.35px;font-size:15px;color:#1c1c1c;transform:scaleX(1.1294);">Marketing management s...</div>
<svg class="r" style="left:893px;top:461px;" width="16" height="10" viewBox="0 0 16 10"><path d="M3.5 2 L12.5 2 L8 7 Z" fill="#0b2d4f"/></svg>
<div class="t" id="k9403_4718" style="left:940.30px;top:459.05px;font-size:15px;color:#0a55d6;transform:scaleX(1.1170);">Andrew Baker</div>
<div class="t" id="k12015_4718" style="left:1201.50px;top:459.05px;font-size:15px;color:#0a55d6;transform:scaleX(1.1333);">Accom</div>
<div class="t" id="k14634_4721" style="left:1463.40px;top:459.35px;font-size:15px;color:#1c1c1c;transform:scaleX(1.0206);">8/4/2022 12:55 PM</div>
<div class="r" style="left:678.6px;top:481.5px;width:234.0px;height:0;border-top:1px dotted #cfcfd6;"></div>
<div class="r" style="left:940.3px;top:481.5px;width:234.0px;height:0;border-top:1px dotted #cfcfd6;"></div>
<div class="r" style="left:1201.5px;top:481.5px;width:234.0px;height:0;border-top:1px dotted #cfcfd6;"></div>
<div class="r" style="left:1463.4px;top:481.5px;width:234.0px;height:0;border-top:1px dotted #cfcfd6;"></div>
<div class="t" id="k6786_5157" style="left:677.45px;top:503.80px;font-size:14px;color:#767676;transform:scaleX(1.1472);">Name</div>
<div class="t" id="k9403_5157" style="left:940.30px;top:503.80px;font-size:14px;color:#767676;transform:scaleX(1.0933);">Assignees group</div>
<div class="t" id="k12015_5157" style="left:1201.50px;top:503.80px;font-size:14px;color:#767676;transform:scaleX(1.1293);">Owner</div>
<div class="t" id="k14634_5157" style="left:1462.32px;top:503.80px;font-size:14px;color:#767676;transform:scaleX(1.0826);">Sales channel</div>
<div class="t" id="k6790_5393" style="left:677.85px;top:526.55px;font-size:15px;color:#1c1c1c;transform:scaleX(1.1496);">Marketing software</div>
<div class="t" id="k14634_5393" style="left:1462.29px;top:526.55px;font-size:15px;color:#1c1c1c;transform:scaleX(1.1086);">Direct sale</div>
<div class="r" style="left:678.6px;top:549px;width:234.0px;height:0;border-top:1px dotted #cfcfd6;"></div>
<div class="r" style="left:940.3px;top:549px;width:234.0px;height:0;border-top:1px dotted #cfcfd6;"></div>
<div class="r" style="left:1201.5px;top:549px;width:234.0px;height:0;border-top:1px dotted #cfcfd6;"></div>
<div class="r" style="left:1463.4px;top:549px;width:234.0px;height:0;border-top:1px dotted #cfcfd6;"></div>
<div class="t" id="k6786_5836" style="left:678.60px;top:571.70px;font-size:14px;color:#767676;transform:scaleX(1.1311);">Comment</div>
<div class="t" id="k6790_6066" style="left:677.89px;top:593.85px;font-size:15px;color:#1c1c1c;transform:scaleX(1.1109);">New client, first sale. The client needs marketing system and licenses</div>
<div class="r" style="left:678.6px;top:617px;width:1018.9px;height:0;border-top:1px dotted #cfcfd6;"></div>
<svg class="r" style="left:678.6px;top:654.3px;" width="18" height="18" viewBox="0 0 18 18"><rect width="18" height="18" rx="2" fill="#ff4a14"/><path d="M4.5 11.5 L9 7 L13.5 11.5" fill="none" stroke="#fff" stroke-width="2.2" stroke-linecap="round" stroke-linejoin="round"/></svg>
<div class="t" id="k7054_6690" style="left:704.28px;top:655.23px;font-size:16.2px;color:#0b2d4f;transform:scaleX(1.1213);">Contact roles</div>
<svg class="r" style="left:821.5px;top:655.3px;" width="16" height="16" viewBox="0 0 16 16"><path d="M8 1.5 V14.5 M1.5 8 H14.5" stroke="#0b2d4f" stroke-width="2.2" stroke-linecap="round"/></svg>
<svg class="r" style="left:848px;top:655.3px;" width="16" height="16" viewBox="0 0 16 16"><path d="M2.5 7 Q3 2.5 8 2.5 Q11 2.5 12.8 4.8" fill="none" stroke="#0b2d4f" stroke-width="2"/><path d="M13.5 1.5 V5.8 H9.2" fill="none" stroke="#0b2d4f" stroke-width="2" stroke-linejoin="round"/><path d="M13.5 9 Q13 13.5 8 13.5 Q5 13.5 3.2 11.2" fill="none" stroke="#0b2d4f" stroke-width="2"/><path d="M2.5 14.5 V10.2 H6.8" fill="none" stroke="#0b2d4f" stroke-width="2" stroke-linejoin="round"/></svg>
<svg class="r" style="left:880.6px;top:655.3px;" width="6" height="16" viewBox="0 0 6 16"><circle cx="3" cy="2.5" r="1.3" fill="#0b2d4f"/><circle cx="3" cy="8" r="1.3" fill="#0b2d4f"/><circle cx="3" cy="13.5" r="1.3" fill="#0b2d4f"/></svg>
<svg class="r" style="left:902.6px;top:655.3px;" width="16" height="16" viewBox="0 0 16 16"><circle cx="7" cy="7" r="5.2" fill="none" stroke="#0b2d4f" stroke-width="2"/><path d="M10.8 10.8 L14 14" stroke="#0b2d4f" stroke-width="2" stroke-linecap="round"/></svg>
<div class="t" id="k9286_6690" style="left:927.53px;top:657.10px;font-size:14px;color:#767676;transform:scaleX(1.0651);">Search</div>
<div class="t" id="k7644_7257" style="left:764.40px;top:713.80px;font-size:14px;color:#767676;transform:scaleX(1.1167);">Contact</div>
<div class="t" id="k9210_7257" style="left:919.86px;top:713.80px;font-size:14px;color:#767676;transform:scaleX(1.1385);">Primary contact</div>
<div class="t" id="k10768_7257" style="left:1075.72px;top:713.80px;font-size:14px;color:#767676;transform:scaleX(1.0750);">Role</div>
<div class="t" id="k12330_7257" style="left:1231.86px;top:713.80px;font-size:14px;color:#767676;transform:scaleX(1.1411);">Influence</div>
<div class="t" id="k15458_7257" style="left:1544.67px;top:713.80px;font-size:14px;color:#767676;transform:scaleX(1.1279);">Loyalty</div>
<div class="t" id="k13896_7170" style="left:1388.45px;top:705.10px;font-size:14px;color:#767676;transform:scaleX(1.1451);">Decision-making</div>
<div class="t" id="k13896_7340" style="left:1389.60px;top:722.10px;font-size:14px;color:#767676;transform:scaleX(1.1000);">factors</div>
<div class="r" style="left:705.4px;top:746.5px;width:992px;height:1.2px;background:#e4e4e8;border-radius:0px;"></div>
<div class="t" id="k7407_7756" style="left:739.89px;top:763.70px;font-size:14px;color:#767676;transform:scaleX(0.8143);">1</div>
<div class="t" id="k7644_7760" style="left:764.40px;top:763.50px;font-size:14.7px;color:#0a55d6;transform:scaleX(1.1413);">Andrew Baker</div>
<div class="t" id="k9210_7758" style="left:921.00px;top:763.90px;font-size:14px;color:#1c1c1c;transform:scaleX(1.0609);">Yes</div>
<div class="t" id="k10768_7753" style="left:1076.80px;top:763.40px;font-size:14px;color:#1c1c1c;transform:scaleX(1.1074);">Contact person</div>
<div class="t" id="k12330_7760" style="left:1231.77px;top:763.67px;font-size:14.5px;color:#1c1c1c;transform:scaleX(1.2320);">Medium</div>
<div class="t" id="k13896_7753" style="left:1388.56px;top:763.40px;font-size:14px;color:#1c1c1c;transform:scaleX(1.0373);">Ease of Use</div>
<div class="t" id="k15455_7760" style="left:1545.50px;top:763.67px;font-size:14.5px;color:#1c1c1c;transform:scaleX(1.1301);">2 – Supportive</div>
<div class="r" style="left:705.4px;top:791.5px;width:992px;height:1.2px;background:#e4e4e8;border-radius:0px;"></div>
<svg class="r" style="left:678.6px;top:829.5px;" width="18" height="18" viewBox="0 0 18 18"><rect width="18" height="18" rx="2" fill="#ff4a14"/><path d="M4.5 11.5 L9 7 L13.5 11.5" fill="none" stroke="#fff" stroke-width="2.2" stroke-linecap="round" stroke-linejoin="round"/></svg>
<div class="t" id="k7054_8442" style="left:705.40px;top:830.43px;font-size:16.2px;color:#0b2d4f;transform:scaleX(1.1661);">Opportunity team</div>
<svg class="r" style="left:861px;top:830.5px;" width="16" height="16" viewBox="0 0 16 16"><path d="M8 1.5 V14.5 M1.5 8 H14.5" stroke="#0b2d4f" stroke-width="2.2" stroke-linecap="round"/></svg>
<svg class="r" style="left:887.5px;top:830.5px;" width="16" height="16" viewBox="0 0 16 16"><path d="M2.5 7 Q3 2.5 8 2.5 Q11 2.5 12.8 4.8" fill="none" stroke="#0b2d4f" stroke-width="2"/><path d="M13.5 1.5 V5.8 H9.2" fill="none" stroke="#0b2d4f" stroke-width="2" stroke-linejoin="round"/><path d="M13.5 9 Q13 13.5 8 13.5 Q5 13.5 3.2 11.2" fill="none" stroke="#0b2d4f" stroke-width="2"/><path d="M2.5 14.5 V10.2 H6.8" fill="none" stroke="#0b2d4f" stroke-width="2" stroke-linejoin="round"/></svg>
<svg class="r" style="left:919.8px;top:830.5px;" width="6" height="16" viewBox="0 0 6 16"><circle cx="3" cy="2.5" r="1.3" fill="#0b2d4f"/><circle cx="3" cy="8" r="1.3" fill="#0b2d4f"/><circle cx="3" cy="13.5" r="1.3" fill="#0b2d4f"/></svg>
<svg class="r" style="left:942.5px;top:830.5px;" width="16" height="16" viewBox="0 0 16 16"><circle cx="7" cy="7" r="5.2" fill="none" stroke="#0b2d4f" stroke-width="2"/><path d="M10.8 10.8 L14 14" stroke="#0b2d4f" stroke-width="2" stroke-linecap="round"/></svg>
<div class="t" id="k9680_8442" style="left:966.93px;top:832.30px;font-size:14px;color:#767676;transform:scaleX(1.0721);">Search</div>
<div class="t" id="k7644_8935" style="left:764.40px;top:881.60px;font-size:14px;color:#767676;transform:scaleX(1.1167);">Contact</div>
<div class="t" id="k12330_8935" style="left:1231.93px;top:881.60px;font-size:14px;color:#767676;transform:scaleX(1.0714);">Role</div>
<div class="r" style="left:705.4px;top:907.7px;width:992px;height:1.2px;background:#e4e4e8;border-radius:0px;"></div>
<div class="t" id="k7407_9378" style="left:739.89px;top:925.90px;font-size:14px;color:#767676;transform:scaleX(0.8143);">1</div>
<div class="t" id="k7644_9378" style="left:764.40px;top:925.30px;font-size:14.7px;color:#0a55d6;transform:scaleX(1.1381);">James Smith</div>
<div class="t" id="k12330_9378" style="left:1231.87px;top:925.47px;font-size:14.5px;color:#1c1c1c;transform:scaleX(1.1309);">Sales manager</div>
<div class="r" style="left:705.4px;top:952.7px;width:992px;height:1.2px;background:#e4e4e8;border-radius:0px;"></div>
<div class="t" id="k7380_9829" style="left:738.00px;top:971.00px;font-size:14px;color:#767676;transform:scaleX(1.2000);">2</div>
<div class="t" id="k7644_9829" style="left:764.40px;top:970.40px;font-size:14.7px;color:#0a55d6;transform:scaleX(1.0938);">Caleb Jones</div>
<div class="t" id="k12330_9829" style="left:1231.86px;top:970.57px;font-size:14.5px;color:#1c1c1c;transform:scaleX(1.1443);">Sales representative</div>
<div class="r" style="left:705.4px;top:997.8px;width:992px;height:1.2px;background:#e4e4e8;border-radius:0px;"></div>
<svg class="r" style="left:678.6px;top:1035.5px;" width="18" height="18" viewBox="0 0 18 18"><rect width="18" height="18" rx="2" fill="#ff4a14"/><path d="M4.5 11.5 L9 7 L13.5 11.5" fill="none" stroke="#fff" stroke-width="2.2" stroke-linecap="round" stroke-linejoin="round"/></svg>
<div class="t" id="k7054_10500" style="left:704.24px;top:1036.23px;font-size:16.2px;color:#0b2d4f;transform:scaleX(1.1581);">Competitors</div>
<svg class="r" style="left:816px;top:1036.5px;" width="16" height="16" viewBox="0 0 16 16"><path d="M8 1.5 V14.5 M1.5 8 H14.5" stroke="#0b2d4f" stroke-width="2.2" stroke-linecap="round"/></svg>
<svg class="r" style="left:842.6px;top:1036.5px;" width="16" height="16" viewBox="0 0 16 16"><path d="M2.5 7 Q3 2.5 8 2.5 Q11 2.5 12.8 4.8" fill="none" stroke="#0b2d4f" stroke-width="2"/><path d="M13.5 1.5 V5.8 H9.2" fill="none" stroke="#0b2d4f" stroke-width="2" stroke-linejoin="round"/><path d="M13.5 9 Q13 13.5 8 13.5 Q5 13.5 3.2 11.2" fill="none" stroke="#0b2d4f" stroke-width="2"/><path d="M2.5 14.5 V10.2 H6.8" fill="none" stroke="#0b2d4f" stroke-width="2" stroke-linejoin="round"/></svg>
<svg class="r" style="left:874.8px;top:1036.5px;" width="6" height="16" viewBox="0 0 6 16"><circle cx="3" cy="2.5" r="1.3" fill="#0b2d4f"/><circle cx="3" cy="8" r="1.3" fill="#0b2d4f"/><circle cx="3" cy="13.5" r="1.3" fill="#0b2d4f"/></svg>
<svg class="r" style="left:897.2px;top:1036.5px;" width="16" height="16" viewBox="0 0 16 16"><circle cx="7" cy="7" r="5.2" fill="none" stroke="#0b2d4f" stroke-width="2"/><path d="M10.8 10.8 L14 14" stroke="#0b2d4f" stroke-width="2" stroke-linecap="round"/></svg>
<div class="t" id="k9229_10500" style="left:921.83px;top:1038.10px;font-size:14px;color:#767676;transform:scaleX(1.0721);">Search</div>
<div class="r" style="left:1734.8px;top:230.9px;width:401px;height:830px;background:#fff;border-radius:8px;"></div>
<div class="t" id="k17613_2656" style="left:1760.17px;top:250.30px;font-size:18px;color:#0b2d4f;transform:scaleX(1.1298);">Next steps</div>
<svg class="r" style="left:1867px;top:251px;" width="17" height="17" viewBox="0 0 17 17"><path d="M8.5 1.5 V15.5 M1.5 8.5 H15.5" stroke="#0b2d4f" stroke-width="2" stroke-linecap="round"/></svg>
<svg class="r" style="left:2093px;top:252px;" width="15" height="15" viewBox="0 0 15 15"><path d="M2 2 L13 13 M13 2 L2 13" stroke="#0b2d4f" stroke-width="2" stroke-linecap="round"/></svg>
<div class="r" style="left:1760.7px;top:279.2px;width:349px;height:107.2px;background:#e5ebf8;border-radius:8px;"></div>
<svg class="r" style="left:1773.9px;top:292.3px;" width="23" height="23" viewBox="0 0 23 23"><defs><linearGradient id="gp" x1="0" y1="0" x2="1" y2="1"><stop offset="0" stop-color="#7c4ce8"/><stop offset="1" stop-color="#5a26b4"/></linearGradient></defs><circle cx="11.5" cy="11.5" r="11.3" fill="url(#gp)"/><rect x="7.5" y="6.5" width="1.8" height="11" fill="#fff"/><path d="M9 6.8 H16 L14.2 9.6 L16 12.4 H9 Z" fill="#fff"/></svg>
<div class="t" id="k18061_3094" style="left:1806.10px;top:296.65px;font-size:15px;color:#1c1c1c;transform:scaleX(1.1391);">Assign opportunity owner</div>
<svg class="r" style="left:1775px;top:356.6px;" width="16" height="16" viewBox="0 0 16 16"><circle cx="8" cy="8" r="8" fill="#ece8e4"/><path d="M2 16 Q8 11 14 16 Z" fill="#8a7a70"/><ellipse cx="8" cy="8.8" rx="4" ry="5" fill="#d8a488"/><path d="M3.8 7.5 Q3.5 2.5 8 2.5 Q12.5 2.5 12.2 7.5 Q11 5 8 5 Q5 5 3.8 7.5 Z" fill="#2c2420"/></svg>
<div class="t" id="k18068_3693" style="left:1805.81px;top:356.98px;font-size:14.5px;color:#0a55d6;transform:scaleX(0.9933);">Paul Peterson</div>
<div class="t" id="k20302_3693" style="left:2029.25px;top:357.40px;font-size:14px;color:#767676;transform:scaleX(0.9522);">15.12.2021</div>
<div class="r" style="left:1620.7px;top:395.8px;width:489px;height:292.5px;background:#fff;border-radius:8px;box-shadow:0 2px 14px rgba(40,40,70,0.16)"></div>
<div class="t" id="k16395_4321" style="left:1639.50px;top:416.38px;font-size:18.5px;color:#1c1c1c;transform:scaleX(1.1370);">Assign opportunity owner</div>
<svg class="r" style="left:2069px;top:420px;" width="17" height="17" viewBox="0 0 17 17"><path d="M6.5 3 H4 Q2.5 3 2.5 4.5 V13 Q2.5 14.5 4 14.5 H12.5 Q14 14.5 14 13 V10.5" fill="none" stroke="#0b2d4f" stroke-width="1.9"/><path d="M9 2.5 H14.5 V8 M14.5 2.5 L7.5 9.5" fill="none" stroke="#0b2d4f" stroke-width="1.9" stroke-linecap="round" stroke-linejoin="round"/></svg>
<div class="r" style="left:1639px;top:460.2px;width:173.6px;height:19.8px;background:#fde3c9;border-radius:10px;"></div>
<svg class="r" style="left:1643.5px;top:461.5px;transform:scale(1.06);transform-origin:0 0" width="17" height="17" viewBox="0 0 17 17"><circle cx="8" cy="8" r="8" fill="#ece8e4"/><path d="M2 16 Q8 11 14 16 Z" fill="#8a7a70"/><ellipse cx="8" cy="8.8" rx="4" ry="5" fill="#d8a488"/><path d="M3.8 7.5 Q3.5 2.5 8 2.5 Q12.5 2.5 12.2 7.5 Q11 5 8 5 Q5 5 3.8 7.5 Z" fill="#2c2420"/></svg>
<div class="t" id="k16660_4756" style="left:1666.00px;top:462.85px;font-size:15px;color:#8e4b05;transform:scaleX(1.1582);">Activity not started</div>
<div class="t" id="k19098_4763" style="left:1908.76px;top:463.55px;font-size:15px;color:#767676;transform:scaleX(1.0414);">Feb 9 9:50 PM - 10:20 PM</div>
<svg class="r" style="left:1640px;top:503px;" width="15" height="15" viewBox="0 0 15 15"><path d="M8 3.5 L10 1.8 Q11.5 0.8 12.8 2.1 Q14 3.4 13 4.8 L9.8 8 Q8.5 9 7.3 8" fill="none" stroke="#9a9aa0" stroke-width="1.5" stroke-linecap="round"/><path d="M7 11.5 L5 13.2 Q3.5 14.2 2.2 12.9 Q1 11.6 2 10.2 L5.2 7 Q6.5 6 7.7 7" fill="none" stroke="#9a9aa0" stroke-width="1.5" stroke-linecap="round"/></svg>
<div class="t" id="k16660_5163" style="left:1666.00px;top:503.55px;font-size:15px;color:#767676;transform:scaleX(1.1149);">Connections:</div>
<svg class="r" style="left:1641px;top:535.5px;" width="14" height="14" viewBox="0 0 14 14"><rect x="1" y="1" width="8.5" height="12.5" fill="none" stroke="#a9c2ef" stroke-width="1.6"/><path d="M3.5 4 H7 M3.5 7 H7 M3.5 10 H7" stroke="#a9c2ef" stroke-width="1.4"/><rect x="11" y="4" width="2.2" height="9.5" fill="#a9c2ef"/></svg>
<div class="t" id="k16660_5480" style="left:1666.00px;top:535.25px;font-size:15px;color:#0a55d6;transform:scaleX(1.1378);">Accom</div>
<svg class="r" style="left:2074.5px;top:534.5px;" width="16" height="16" viewBox="0 0 16 16"><path d="M3.2 1.5 L5.8 1.2 L7.2 4.8 L5.5 6.2 Q6.8 9.2 9.8 10.6 L11.2 8.8 L14.8 10.2 L14.5 12.8 Q14 14.6 12 14.6 Q6.5 14 3 9.5 Q1.2 6.5 1.4 3.4 Q1.6 1.8 3.2 1.5 Z" fill="#18a018"/></svg>
<svg class="r" style="left:1641px;top:567px;" width="14" height="14" viewBox="0 0 14 14"><circle cx="7" cy="3.8" r="3" fill="#a9c2ef"/><path d="M1 13.5 Q1 8.5 7 8.5 Q13 8.5 13 13.5 Z" fill="#a9c2ef"/></svg>
<div class="t" id="k16660_5794" style="left:1666.00px;top:566.65px;font-size:15px;color:#0a55d6;transform:scaleX(1.1213);">Andrew Baker</div>
<svg class="r" style="left:2047.5px;top:566px;" width="16" height="16" viewBox="0 0 16 16"><rect x="1" y="2.5" width="14" height="11" rx="1" fill="#f7930e"/><path d="M1.5 3.5 L8 8.5 L14.5 3.5" fill="none" stroke="#fff" stroke-width="1.5"/></svg>
<svg class="r" style="left:2074.5px;top:566px;" width="16" height="16" viewBox="0 0 16 16"><path d="M3.2 1.5 L5.8 1.2 L7.2 4.8 L5.5 6.2 Q6.8 9.2 9.8 10.6 L11.2 8.8 L14.8 10.2 L14.5 12.8 Q14 14.6 12 14.6 Q6.5 14 3 9.5 Q1.2 6.5 1.4 3.4 Q1.6 1.8 3.2 1.5 Z" fill="#18a018"/></svg>
<svg class="r" style="left:1641px;top:598.5px;" width="14" height="14" viewBox="0 0 14 14"><path d="M0.5 1 H13.5 L12.5 4 H1.5 Z" fill="#a9c2ef"/><path d="M2.5 6 H11.5 L10.8 8.8 H3.2 Z" fill="#a9c2ef"/><rect x="4.5" y="10.5" width="5" height="2.8" rx="1.4" fill="#a9c2ef"/></svg>
<div class="t" id="k16660_6117" style="left:1664.86px;top:598.95px;font-size:15px;color:#0a55d6;transform:scaleX(1.1374);">Marketing management system / Andrew Baker, Accom</div>
<svg class="r" style="left:1734px;top:645.5px;" width="15" height="15" viewBox="0 0 15 15"><path d="M2.2 1.8 L13 12.6 M13 1.8 L2.2 12.6" stroke="#0b2d4f" stroke-width="1.6" stroke-linecap="round"/></svg>
<div class="t" id="k17554_6583" style="left:1754.27px;top:644.70px;font-size:16px;color:#0b2d4f;transform:scaleX(1.1333);">Cancel activity</div>
<div class="r" style="left:1899px;top:634.9px;width:192.8px;height:35.6px;background:#0d870b;border-radius:4px;"></div>
<svg class="r" style="left:1917px;top:645px;" width="18" height="15" viewBox="0 0 18 15"><path d="M2.5 7.5 L7 12 L15.5 3" fill="none" stroke="#fff" stroke-width="2.3" stroke-linecap="round" stroke-linejoin="round"/></svg>
<div class="t" id="k19398_6583" style="left:1938.66px;top:644.70px;font-size:16px;color:#fff;transform:scaleX(1.1359);">Complete acivity</div>
<div class="r" style="left:0;top:1054px;width:2164px;height:51px;background:#e8ecee;border-top-left-radius:10px"></div>
<div class="r" style="left:290.7px;top:1054px;width:215.3px;height:46.6px;background:#fff;border-radius:10px;"></div>
<svg class="r" style="left:15.5px;top:1063.7px;" width="28" height="27.5" viewBox="0 0 28 27.5"><defs><linearGradient id="gt" x1="0" y1="0" x2="0" y2="1"><stop offset="0" stop-color="#f45a2a"/><stop offset="1" stop-color="#d8300c"/></linearGradient></defs><rect width="28" height="27.5" rx="4" fill="url(#gt)"/><path d="M5 9.5 L23.5 14 L13 14.5 L10.5 19.5 Z" fill="#fff"/></svg>
<div class="r" style="left:66px;top:1062px;width:1px;height:33px;background:#d3d7da;border-radius:0px;"></div>
<svg class="r" style="left:86.8px;top:1063.7px;" width="27.5" height="27.5" viewBox="0 0 27.5 27.5"><rect width="27.5" height="27.5" rx="4" fill="#bfc3c6"/><rect x="10" y="5" width="9" height="16" fill="#fff"/><rect x="20.5" y="8" width="3" height="13" fill="#fff"/><circle cx="8.5" cy="14" r="3.6" fill="#fff" stroke="#bfc3c6" stroke-width="1"/><path d="M2.5 23.5 Q2.5 18 8.5 18 Q14.5 18 14.5 23.5 Z" fill="#fff" stroke="#bfc3c6" stroke-width="1"/></svg>
<div class="t" id="k1230_10830" style="left:121.96px;top:1070.85px;font-size:14.3px;color:#1c3352;transform:scaleX(1.0447);">Leads</div>
<svg class="r" style="left:301px;top:1063.7px;" width="27.7" height="27.5" viewBox="0 0 27.7 27.5"><defs><linearGradient id="gt2" x1="0" y1="0" x2="0" y2="1"><stop offset="0" stop-color="#22a81a"/><stop offset="1" stop-color="#0d8a0c"/></linearGradient></defs><rect width="27.7" height="27.5" rx="4" fill="url(#gt2)"/><path d="M4.5 5 H23.2 L22 9.5 H5.7 Z" fill="#fff"/><path d="M7.3 12.5 H20.4 L19.2 16.5 H8.5 Z" fill="#fff"/><rect x="9.5" y="19" width="8.7" height="4" rx="2" fill="#fff"/></svg>
<div class="t" id="k3374_10830" style="left:337.40px;top:1070.85px;font-size:14.3px;color:#1c3352;transform:scaleX(1.1329);">Opportunities</div>
<svg class="r" style="left:448px;top:1064.5px;" width="25" height="25" viewBox="0 0 25 25"><defs><clipPath id="cav"><circle cx="12.5" cy="12.5" r="12.5"/></clipPath></defs><g clip-path="url(#cav)"><circle cx="12.5" cy="12.5" r="12.5" fill="#e9552d"/><path d="M7.5 19.5 Q6.2 9 10 6.2 Q13.5 4.2 16.8 6.8 Q19.5 10 19.3 15 Q19.6 20 22 22.5 Q18.5 25 15.6 21.5 L15.4 15 Q12.5 13 9.6 19.5 Z" fill="#17100e"/><ellipse cx="12.6" cy="13.2" rx="3.4" ry="4.8" fill="#f0c8a8"/><path d="M5 25 Q7.5 19.2 12.5 19.2 Q16 19.2 18 21 L17 25 Z" fill="#e24f29"/></g></svg>
<svg class="r" style="left:480px;top:1070px;" width="15" height="15" viewBox="0 0 15 15"><path d="M2 2 L13 13 M13 2 L2 13" stroke="#0b2d4f" stroke-width="1.7" stroke-linecap="round"/></svg>
</body></html>
